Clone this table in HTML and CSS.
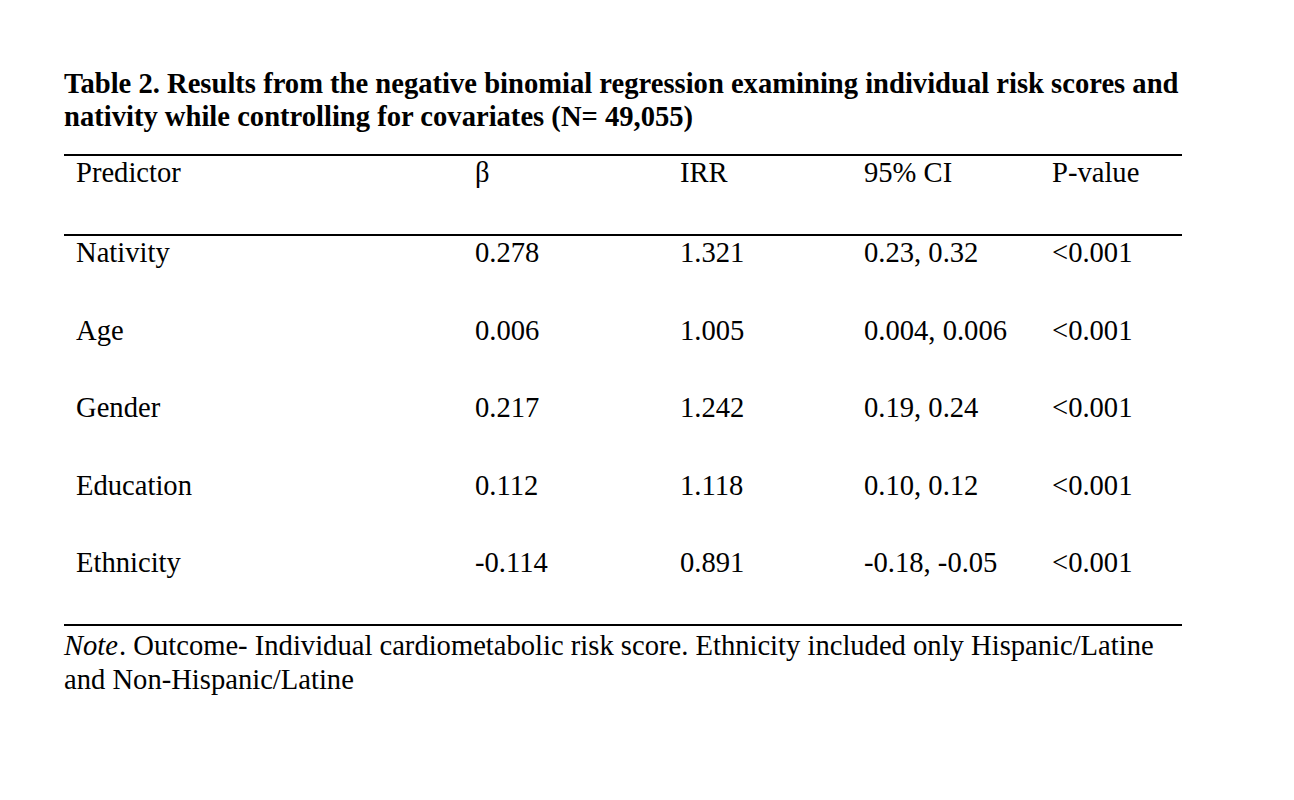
FILE: index.html
```html
<!DOCTYPE html>
<html>
<head>
<meta charset="utf-8">
<link rel="stylesheet" href="styles.css">
</head>
<body>
<div class="page">
  <div class="title">Table 2. Results from the negative binomial regression examining individual risk scores and nativity while controlling for covariates (N= 49,055)</div>
  <div class="table">
    <div class="row head">
      <div class="cell">Predictor</div>
      <div class="cell">β</div>
      <div class="cell">IRR</div>
      <div class="cell">95% CI</div>
      <div class="cell">P-value</div>
    </div>
    <div class="row">
      <div class="cell">Nativity</div>
      <div class="cell">0.278</div>
      <div class="cell">1.321</div>
      <div class="cell">0.23, 0.32</div>
      <div class="cell">&lt;0.001</div>
    </div>
    <div class="row">
      <div class="cell">Age</div>
      <div class="cell">0.006</div>
      <div class="cell">1.005</div>
      <div class="cell">0.004, 0.006</div>
      <div class="cell">&lt;0.001</div>
    </div>
    <div class="row">
      <div class="cell">Gender</div>
      <div class="cell">0.217</div>
      <div class="cell">1.242</div>
      <div class="cell">0.19, 0.24</div>
      <div class="cell">&lt;0.001</div>
    </div>
    <div class="row">
      <div class="cell">Education</div>
      <div class="cell">0.112</div>
      <div class="cell">1.118</div>
      <div class="cell">0.10, 0.12</div>
      <div class="cell">&lt;0.001</div>
    </div>
    <div class="row last">
      <div class="cell">Ethnicity</div>
      <div class="cell">-0.114</div>
      <div class="cell">0.891</div>
      <div class="cell">-0.18, -0.05</div>
      <div class="cell">&lt;0.001</div>
    </div>
  </div>
  <div class="note"><i class="em">Note</i>. Outcome- Individual cardiometabolic risk score. Ethnicity included only Hispanic/Latine and Non-Hispanic/Latine</div>
</div>
</body>
</html>
```
FILE: styles.css
```css
html, body {
  margin: 0;
  padding: 0;
  background: #fff;
}
body {
  font-family: "Liberation Serif", "Times New Roman", serif;
  color: #000;
}
.page {
  padding: 67px 0 0 64px;
  width: 1118px;
}
.title {
  font-weight: bold;
  font-size: 28.6px;
  line-height: 33px;
  width: 1125px;
}
.table {
  margin-top: 21px;
  border-top: 2px solid #000;
  border-bottom: 2px solid #000;
}
.row {
  display: grid;
  grid-template-columns: 399px 205px 184px 188px 142px;
  height: 78px;
  font-size: 28.6px;
  line-height: 28px;
}
.row.head {
  border-bottom: 2px solid #000;
}
.row:not(.head) {
  height: 77.6px;
}
.cell {
  padding: 3px 0 0 12px;
  white-space: nowrap;
}
.note {
  font-size: 28.6px;
  line-height: 34px;
  margin-top: 3px;
}
.em {
  font-style: italic;
  padding-right: 1px;
}
```
